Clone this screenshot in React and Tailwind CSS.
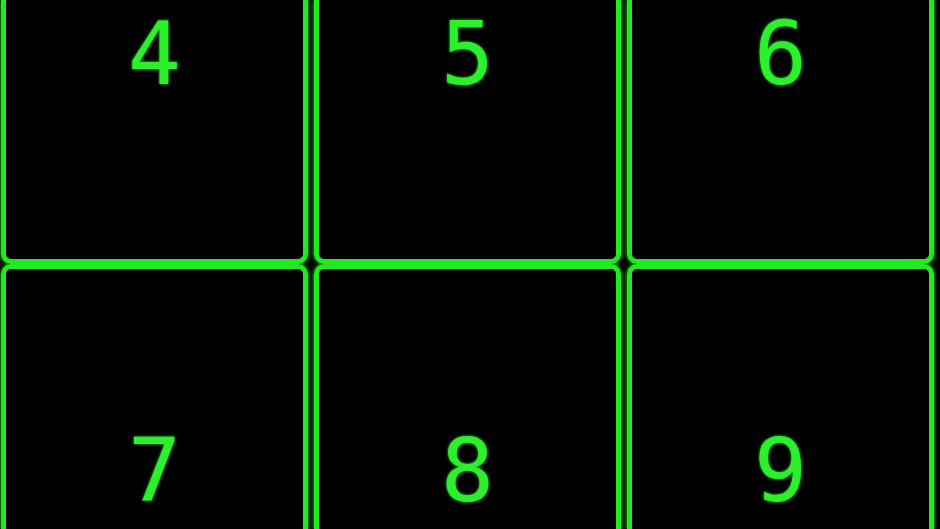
import React from 'react'

const rows = [
  { keys: ['4', '5', '6'], cell: 'h-[264px] border-t-0 rounded-t-none pt-[1px]' },
  { keys: ['7', '8', '9'], cell: 'h-[265px] border-b-0 rounded-b-none pt-[149px]' },
]

function Key({ label, cell }) {
  return (
    <div className={`${cell} rounded-[10px] border-[5px] border-[#22ea22] shadow-[0_0_4px_#22ea22] flex justify-center`}>
      <span className="text-[88px] leading-[1.2] text-[#2bf02b] [text-shadow:0_0_3px_#22ea22] font-['DejaVu_Sans_Mono',monospace]">
        {label}
      </span>
    </div>
  )
}

export default function App() {
  return (
    <div className="w-[940px] h-[529px] bg-black overflow-hidden">
      <div className="grid grid-cols-3 gap-x-[6px] w-[933px] ml-[1px]">
        {rows.map((row) =>
          row.keys.map((k) => <Key key={k} label={k} cell={row.cell} />)
        )}
      </div>
    </div>
  )
}
